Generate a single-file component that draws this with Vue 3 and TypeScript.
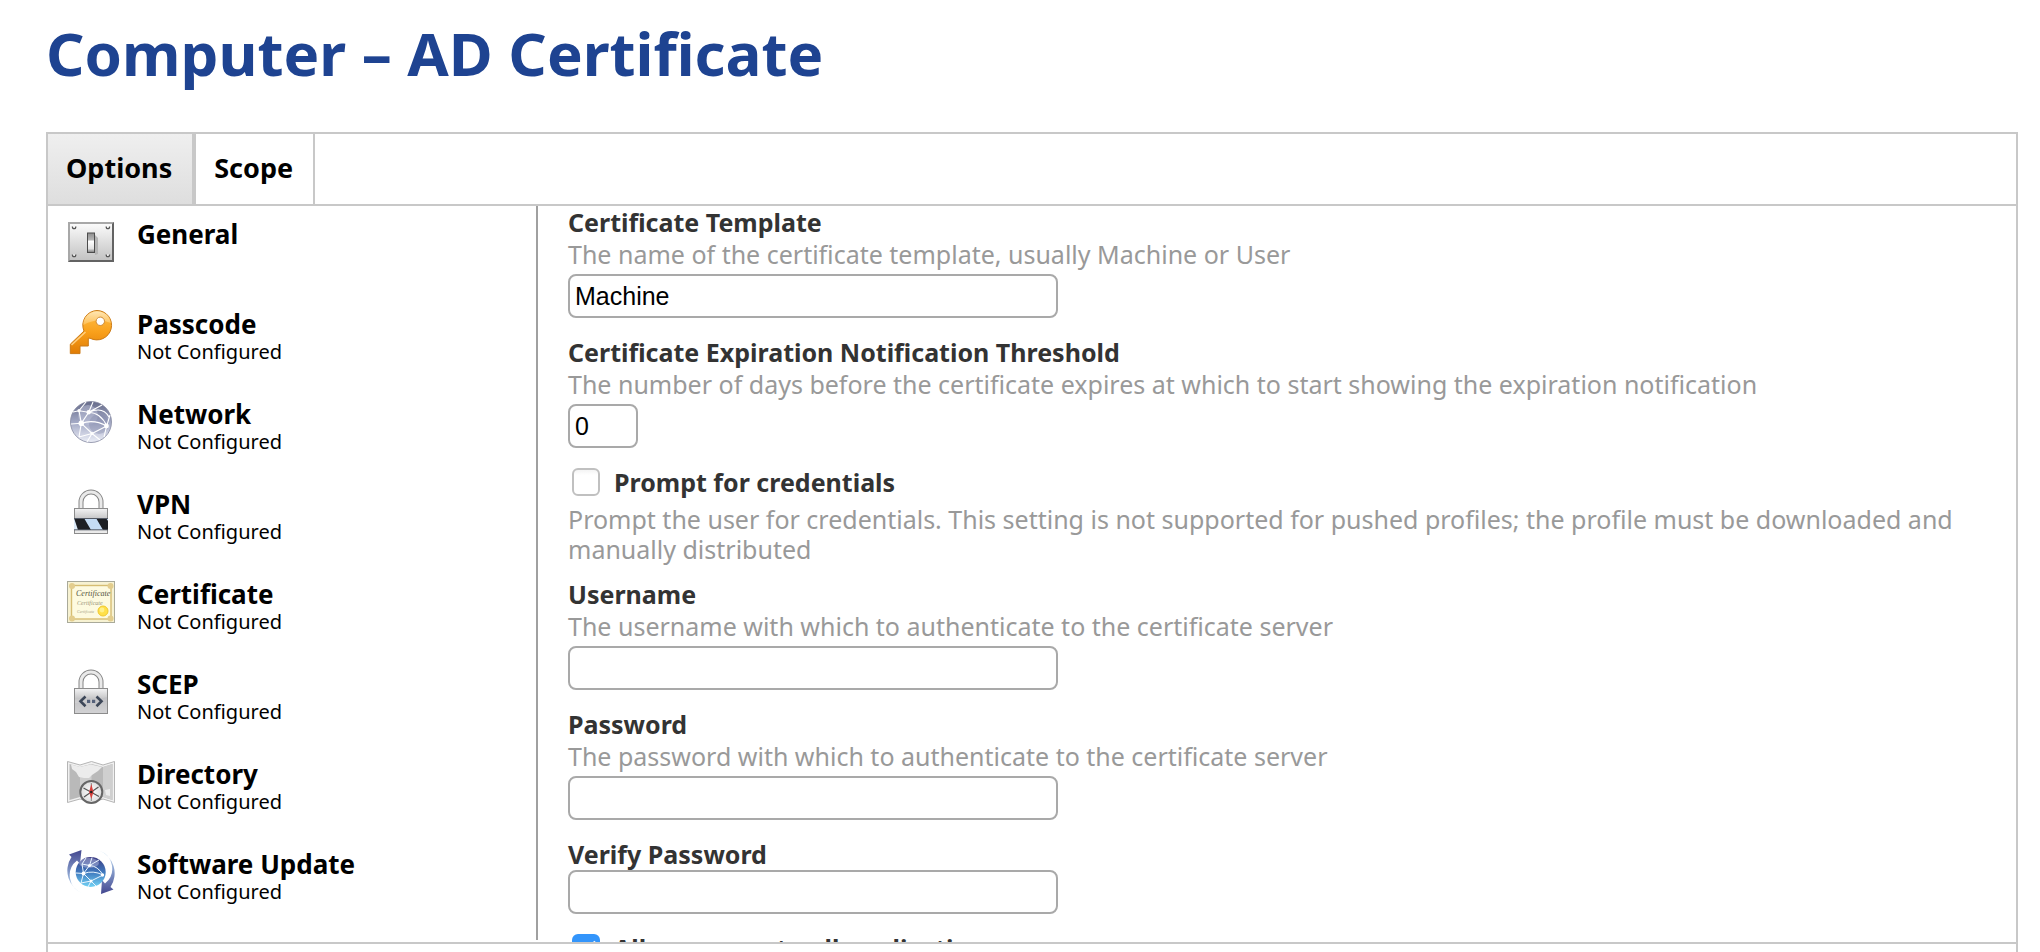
<script setup lang="ts">
import { ref } from 'vue'

interface Payload {
  id: string
  name: string
  status?: string
}

const tabs = ['Options', 'Scope']
const activeTab = ref('Options')

const payloads: Payload[] = [
  { id: 'general', name: 'General' },
  { id: 'passcode', name: 'Passcode', status: 'Not Configured' },
  { id: 'network', name: 'Network', status: 'Not Configured' },
  { id: 'vpn', name: 'VPN', status: 'Not Configured' },
  { id: 'certificate', name: 'Certificate', status: 'Not Configured' },
  { id: 'scep', name: 'SCEP', status: 'Not Configured' },
  { id: 'directory', name: 'Directory', status: 'Not Configured' },
  { id: 'update', name: 'Software Update', status: 'Not Configured' },
]

const template = ref('Machine')
const threshold = ref('0')
const promptForCredentials = ref(false)
const username = ref('')
const password = ref('')
const verifyPassword = ref('')
const allowAll = ref(true)
</script>

<template>
  <div class="page">
    <h1 class="title">Computer – AD Certificate</h1>

    <main class="panel">
      <div class="tabs" role="tablist">
        <button
          v-for="tab in tabs"
          :key="tab"
          type="button"
          role="tab"
          class="tab"
          :class="{ active: tab === activeTab }"
          :aria-selected="tab === activeTab"
          @click="activeTab = tab"
        >{{ tab }}</button>
      </div>

      <div class="body">
        <nav class="sidebar" aria-label="Payloads">
          <a v-for="p in payloads" :key="p.id" class="payload" :href="'#' + p.id">
            <svg class="icon" viewBox="0 0 48 48" aria-hidden="true">
              <g v-if="p.id === 'general'">
                <defs>
                  <linearGradient id="plate" x1="0" y1="0" x2="0" y2="1">
                    <stop offset="0" stop-color="#fafafa" /><stop offset="1" stop-color="#c3c3c3" />
                  </linearGradient>
                  <linearGradient id="toggle" x1="0" y1="0" x2="0" y2="1">
                    <stop offset="0" stop-color="#8d8d8d" /><stop offset="0.35" stop-color="#b5b5b5" />
                    <stop offset="0.42" stop-color="#ffffff" /><stop offset="0.8" stop-color="#e2e2e2" />
                    <stop offset="1" stop-color="#777777" />
                  </linearGradient>
                </defs>
                <rect x="1" y="4" width="46" height="40" fill="#a8a8a8" />
                <path d="M1 44H47V4L45 6V42H3Z" fill="#636363" />
                <rect x="3" y="6" width="42" height="36" fill="url(#plate)" />
                <g fill="#ffffff" stroke="#555555" stroke-width="1.3">
                  <path d="M5.4 8.5a1.7 2.2 0 0 0 3.4 0" /><path d="M39.2 8.5a1.7 2.2 0 0 0 3.4 0" />
                  <path d="M5.4 36.5a1.7 2.2 0 0 0 3.4 0" /><path d="M39.2 36.5a1.7 2.2 0 0 0 3.4 0" />
                </g>
                <path d="M28 17l3 3v16l-3 1z" fill="#b4b4b4" />
                <rect x="20.5" y="15" width="7" height="19.5" fill="url(#toggle)" stroke="#4c4c4c" />
              </g>

              <g v-else-if="p.id === 'passcode'">
                <defs>
                  <linearGradient id="gold" x1="0" y1="0" x2="0" y2="1">
                    <stop offset="0" stop-color="#ffc04a" /><stop offset="0.5" stop-color="#f9a01b" />
                    <stop offset="1" stop-color="#e07c05" />
                  </linearGradient>
                  <linearGradient id="shine" x1="0" y1="0" x2="0" y2="1">
                    <stop offset="0" stop-color="#fff0cf" /><stop offset="1" stop-color="#ffc35c" />
                  </linearGradient>
                </defs>
                <path
                  d="M30 2.5a14.7 14.7 0 1 1-7 27.7h-1.7V38H13v7.6H3.3V36.2L17 23A14.7 14.7 0 0 1 30 2.5Z"
                  fill="url(#gold)" stroke="#cb7a16" stroke-width="1"
                />
                <path d="M30 3.2c7.5 0 13 5 13.8 11.8C34 11 25 12 16.4 17C16 10 22 3.2 30 3.2Z" fill="url(#shine)" opacity="0.8" />
                <path d="M4.5 37L18.5 24" stroke="#ffcf80" stroke-width="1.6" />
                <circle cx="33.3" cy="13.3" r="4.2" fill="#ffffff" stroke="#cf8a34" />
              </g>

              <g v-else-if="p.id === 'network'">
                <defs>
                  <linearGradient id="globe" x1="0" y1="0" x2="0" y2="1">
                    <stop offset="0" stop-color="#666b8a" /><stop offset="0.5" stop-color="#a2a8c4" />
                    <stop offset="1" stop-color="#eceef7" />
                  </linearGradient>
                </defs>
                <circle cx="24" cy="24" r="20.5" fill="url(#globe)" stroke="#8488a0" stroke-width="0.8" />
                <circle cx="21" cy="17" r="10" fill="#c3c8dd" opacity="0.45" />
                <circle cx="32" cy="26" r="10" fill="#7d84a6" opacity="0.35" />
                <g fill="none" stroke="#ffffff" stroke-width="1.1">
                  <path d="M12 12.7L21.7 14.3L14.3 25.3ZM21.7 14.3Q34 15 39.7 28Q27 21 14.3 25.3M14.3 25.3L25 35.5L39.7 28M4 26L14.3 25.3L12 39M25 35.5L12 39M25 35.5L33 42M25 35.5L20 44M21.7 14.3L26 4M21.7 14.3L35 7M12 12.7L19 4M12 12.7L6 14M39.7 28L43 17M39.7 28L37 39M22 14.3Q36 8 42 19" />
                </g>
                <g fill="#ffffff">
                  <circle cx="14.3" cy="25.3" r="2.8" /><circle cx="21.7" cy="14.3" r="2.2" />
                  <circle cx="12" cy="12.7" r="1.6" /><circle cx="39.5" cy="28" r="2.4" /><circle cx="25" cy="35.5" r="1.5" />
                </g>
              </g>

              <g v-else-if="p.id === 'vpn' || p.id === 'scep'">
                <defs>
                  <linearGradient :id="p.id + '-lock'" x1="0" y1="0" x2="0" y2="1">
                    <stop offset="0" stop-color="#f4f4f4" /><stop offset="0.4" stop-color="#c6c6c8" />
                    <stop offset="1" stop-color="#eeeeee" />
                  </linearGradient>
                </defs>
                <path d="M14 21V14a10 10 0 0 1 20 0v7" fill="none" stroke="#858585" stroke-width="5" />
                <path d="M14 21V14a10 10 0 0 1 20 0v7" fill="none" stroke="#e9e9e9" stroke-width="3" />
                <rect x="7.5" y="20.5" width="33" height="25" :fill="'url(#' + p.id + '-lock)'" stroke="#8c8c8c" />
                <g v-if="p.id === 'vpn'">
                  <rect x="7" y="30" width="34" height="12" fill="#c5dcf5" />
                  <path d="M7 30h3l7 12H10l-3-5zM7 30h10l7 12H14zM29 30h10l2 3v9h-5z" fill="#1d1f24" />
                  <path d="M7 30v12h4z" fill="#dceaf8" />
                  <path d="M7 30.5H41M7 41.8H41" stroke="#555b66" />
                </g>
                <g v-else>
                  <path d="M8 35Q24 34 40 29V45H8Z" fill="#c0c0c3" opacity="0.6" />
                  <path d="M18.5 28.5L13.5 33.3L18.5 38.2M29.5 28.5L34.5 33.3L29.5 38.2" fill="none" stroke="#3d4758" stroke-width="2.6" />
                  <path d="M20 31.7h3.2v3.2H20zM25 31.7h3.2v3.2H25z" fill="#55617a" />
                </g>
              </g>

              <g v-else-if="p.id === 'certificate'">
                <rect x="0.5" y="3.5" width="47" height="41" fill="#f7f2d2" stroke="#a9aa9a" />
                <rect x="4.5" y="7.5" width="39.5" height="33.5" fill="#fdfae0" stroke="#d6bd72" stroke-width="1.4" />
                <g fill="#e3cd8d">
                  <circle cx="5" cy="8" r="3" /><circle cx="43.5" cy="8" r="3" />
                  <circle cx="5" cy="40.5" r="3" /><circle cx="43.5" cy="40.5" r="3" />
                </g>
                <text x="9" y="18" class="script" font-size="8" fill="#55523f">Certificate</text>
                <text x="10" y="27" class="script" font-size="6" fill="#9a967a">Certificate</text>
                <text x="10" y="35" class="script" font-size="4" fill="#aaa68a">Certificate</text>
                <circle cx="36" cy="33" r="5" fill="#ffe04a" stroke="#f0c92e" />
                <circle cx="35" cy="32" r="2.4" fill="#fff08a" />
              </g>

              <g v-else-if="p.id === 'directory'">
                <defs>
                  <radialGradient id="dial">
                    <stop offset="0" stop-color="#ffffff" /><stop offset="1" stop-color="#dcdcdc" />
                  </radialGradient>
                </defs>
                <path d="M0.5 3.5L13 7L24.5 3.5L36 7L47.500 3.5V44.500L36 41L24.500 44.500L13 41L0.500 44.500Z" fill="#f1f1f1" stroke="#b5b5b5" />
                <path d="M2.500 6L13 9L24.500 6L36 9L45.500 6V42L36 39L24.500 42L13 39L2.500 42Z" fill="#b9b9b9" />
                <path d="M13 9L24.500 6V42L13 39ZM36 9L45.500 6V42L36 39Z" fill="#cfcfcf" />
                <path d="M4 6.500L13 9L24 6.500L35 9L31 13L25 17L22 20L17 20L12 19L9 14L5 11ZM38 32L43 31V38L39 37Z" fill="#ececec" />
                <circle cx="24.300" cy="34" r="11" fill="url(#dial)" stroke="#666666" stroke-width="2" />
                <path d="M16.500 30L32 38.500M17 39L31.500 29" stroke="#555555" stroke-width="1.200" />
                <path d="M24.300 25V43" stroke="#888888" />
                <path d="M24.300 26L26.500 34L24.300 41L22.100 34Z" fill="#d9403c" />
                <circle cx="24.300" cy="34" r="1.300" fill="#222222" />
              </g>

              <g v-else>
                <defs>
                  <linearGradient id="blue" x1="0" y1="0" x2="0" y2="1">
                    <stop offset="0" stop-color="#3d3b82" /><stop offset="0.5" stop-color="#3f78bd" />
                    <stop offset="1" stop-color="#72d3f5" />
                  </linearGradient>
                  <linearGradient id="sweep-up" x1="0" y1="0" x2="0" y2="1">
                    <stop offset="0" stop-color="#43478f" /><stop offset="0.6" stop-color="#8fa8d3" />
                    <stop offset="1" stop-color="#e2f3fb" />
                  </linearGradient>
                  <linearGradient id="sweep-down" x1="0" y1="1" x2="0" y2="0">
                    <stop offset="0" stop-color="#43478f" /><stop offset="0.6" stop-color="#8fa8d3" />
                    <stop offset="1" stop-color="#e2f3fb" />
                  </linearGradient>
                </defs>
                <path d="M16 45.500A24.500 24.500 0 0 1 4.500 9L2 6.500L14.500 2L13 16L10 12.500A19 19 0 0 0 16 45.500Z" fill="url(#sweep-up)" />
                <path d="M32 2.500A24.500 24.500 0 0 1 43.500 39L46.500 41.500L34 46L35 32L38 35.500A19 19 0 0 0 32 2.500Z" fill="url(#sweep-down)" />
                <circle cx="23.700" cy="24" r="15" fill="url(#blue)" />
                <ellipse cx="22" cy="15" rx="10" ry="5" fill="#bfc6e6" opacity="0.450" />
                <path d="M15 16L22.500 17.500L16.500 25.500ZM22.500 17.500Q31 18 36 27Q26 22 16.500 25.500L24 33L36 27M9 25L16.500 25.500L14 35M24 33L14 35M24 33L29 38M22.500 17.500L25 9.500M22.500 17.500L32 12M15 16L19 10M24 33L21 39" fill="none" stroke="#e9f5ff" />
                <g fill="#ffffff">
                  <circle cx="16.500" cy="25.500" r="1.900" /><circle cx="22.500" cy="17.500" r="1.600" />
                  <circle cx="35.500" cy="27" r="1.700" /><circle cx="24" cy="33" r="1.500" />
                </g>
              </g>
            </svg>
            <span class="payload-text">
              <span class="payload-name">{{ p.name }}</span>
              <span v-if="p.status" class="payload-status">{{ p.status }}</span>
            </span>
          </a>
        </nav>

        <form class="form" @submit.prevent>
          <div class="field">
            <label for="template">Certificate Template</label>
            <p>The name of the certificate template, usually Machine or User</p>
            <input id="template" v-model="template" class="box" type="text" />
          </div>
          <div class="field">
            <label for="threshold">Certificate Expiration Notification Threshold</label>
            <p>The number of days before the certificate expires at which to start showing the expiration notification</p>
            <input id="threshold" v-model="threshold" class="box short" type="text" />
          </div>
          <div class="check-field">
            <div class="check-row">
              <input id="prompt" v-model="promptForCredentials" class="check" type="checkbox" />
              <label for="prompt">Prompt for credentials</label>
            </div>
            <p>Prompt the user for credentials. This setting is not supported for pushed profiles; the profile must be downloaded and manually distributed</p>
          </div>
          <div class="field">
            <label for="username">Username</label>
            <p>The username with which to authenticate to the certificate server</p>
            <input id="username" v-model="username" class="box" type="text" />
          </div>
          <div class="field">
            <label for="password">Password</label>
            <p>The password with which to authenticate to the certificate server</p>
            <input id="password" v-model="password" class="box" type="password" />
          </div>
          <div class="field">
            <label for="verify">Verify Password</label>
            <input id="verify" v-model="verifyPassword" class="box" type="password" />
          </div>
          <div class="check-row">
            <input id="allow" v-model="allowAll" class="check" type="checkbox" />
            <label for="allow">Allow access to all applications</label>
          </div>
        </form>
      </div>
      <footer class="footer"></footer>
    </main>
  </div>
</template>

<style>
body {
  margin: 0;
  background: #fff;
}
</style>

<style scoped>
* {
  box-sizing: border-box;
}

.page {
  display: flex;
  flex-direction: column;
  height: 100vh;
  padding: 22px 22px 0 46px;
  overflow: hidden;
  font-family: "Noto Sans", "Open Sans", sans-serif;
  color: #000;
}

.title {
  flex: none;
  margin: 0 0 48px;
  font-size: 60px;
  line-height: 62px;
  font-weight: 700;
  color: #1e4391;
}

.panel {
  display: flex;
  flex: 1;
  flex-direction: column;
  min-height: 0;
  border: 2px solid #c8c8c8;
  border-bottom: 0;
}

.tabs {
  display: flex;
  flex: none;
  height: 72px;
  border-bottom: 2px solid #c8c8c8;
}

.tab {
  margin: 0;
  padding: 0 20px 2px 18px;
  border: 0;
  border-right: 2px solid #c8c8c8;
  background: #fff;
  font: 700 27px/36px "Noto Sans", "Open Sans", sans-serif;
  color: #000;
}

.tab.active {
  border-right-width: 4px;
  background: linear-gradient(#efefef, #dedede);
}

.body {
  display: flex;
  flex: 1;
  min-height: 0;
}

.sidebar {
  flex: none;
  width: 490px;
  margin-bottom: 2px;
  padding: 12px 0 0 19px;
  border-right: 2px solid #a0a0a0;
  overflow: hidden;
}

.payload {
  display: flex;
  gap: 22px;
  height: 90px;
  color: inherit;
  text-decoration: none;
}

.icon {
  flex: none;
  width: 48px;
  height: 48px;
}

.script {
  font-family: "Liberation Serif", serif;
  font-style: italic;
}

.payload-text {
  display: flex;
  flex-direction: column;
  padding-top: 2px;
}

.payload-name {
  font-size: 26px;
  line-height: 28px;
  font-weight: 700;
}

.payload-status {
  font-size: 20px;
  line-height: 28px;
}

.form {
  display: flex;
  flex: 1;
  flex-direction: column;
  min-width: 0;
  padding: 0 30px;
  overflow: hidden;
}

.field {
  display: flex;
  flex: none;
  flex-direction: column;
  align-items: flex-start;
  margin-bottom: 18px;
}

label {
  font-size: 25px;
  line-height: 32px;
  font-weight: 700;
  color: #333;
}

p {
  margin: 0 0 4px;
  font-size: 25px;
  line-height: 32px;
  color: #999;
}

.box {
  width: 490px;
  max-width: 100%;
  height: 44px;
  padding: 0 5px;
  border: 2px solid #a9a9a9;
  border-radius: 8px;
  outline: 0;
  background: #fff;
  font: 25px/32px "Liberation Sans", Arial, sans-serif;
  color: #000;
}

.short {
  width: 70px;
}

.check-field {
  flex: none;
  margin-bottom: 14px;
}

.check-field p {
  margin: 6px 0 0;
  line-height: 30px;
}

.check-row {
  display: flex;
  flex: none;
  align-items: center;
  gap: 14px;
  padding-left: 4px;
}

.check {
  display: grid;
  place-items: center;
  width: 28px;
  height: 28px;
  margin: 0;
  appearance: none;
  border: 2px solid #c0c0c0;
  border-radius: 6px;
  background: linear-gradient(#f4f4f4, #fff 5px);
}

.check:checked {
  border-color: #3395fb;
  background: #3395fb;
}

.check:checked::before {
  content: "";
  width: 8px;
  height: 15px;
  margin-bottom: 4px;
  border: solid #fff;
  border-width: 0 3px 3px 0;
  transform: rotate(40deg);
}

.footer {
  flex: none;
  height: 10px;
  border-top: 2px solid #c8c8c8;
}
</style>
